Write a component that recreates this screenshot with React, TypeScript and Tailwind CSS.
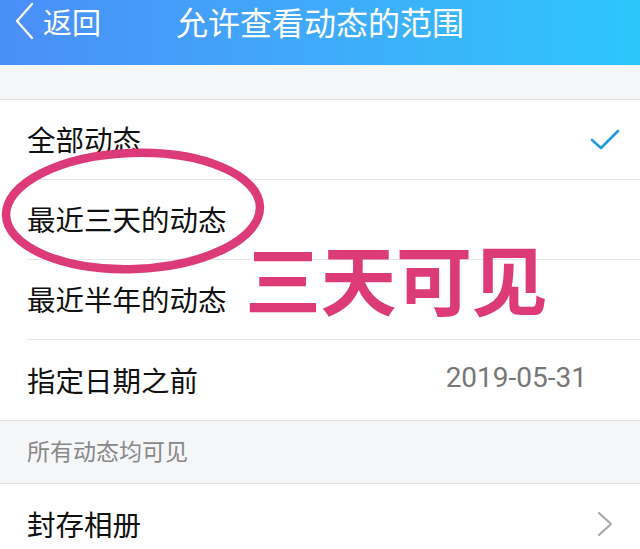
import React from "react";

const cjk = { fontFamily: '"Noto Sans CJK SC", "Noto Sans", sans-serif' };

function Row({
  label,
  right,
  last,
}: {
  label: string;
  right?: React.ReactNode;
  last?: boolean;
}) {
  return (
    <div className="pl-[27px] bg-white">
      <div
        className={
          "h-[80px] flex items-center justify-between pr-[20px] " +
          (last ? "" : "border-b border-[#e6e6e6]")
        }
      >
        <span className="text-[28.5px] text-[#111] leading-none">{label}</span>
        {right}
      </div>
    </div>
  );
}

export default function App() {
  return (
    <div className="relative w-[640px] h-[549px] overflow-hidden bg-[#f5f6f8]" style={cjk}>
      {/* header */}
      <div className="relative h-[65px] bg-gradient-to-r from-[#4a8ef8] to-[#2cc6fb] text-white">
        <div className="h-[42px] flex items-center justify-center">
          <div className="absolute left-[14px] top-[2px] flex items-center h-[38px]">
            <svg width="20" height="38" viewBox="0 0 20 38" fill="none">
              <path d="M18 2 L3 19 L18 36" stroke="white" strokeWidth="2.2" strokeLinecap="round" strokeLinejoin="round" />
            </svg>
            <span className="ml-[9px] text-[29px] leading-[1.2]">返回</span>
          </div>
          <span className="text-[32px] leading-[1.2]">允许查看动态的范围</span>
        </div>
      </div>

      <div className="h-[35px] border-b border-[#e3e3e3]" />

      <div className="bg-white border-b border-[#e3e3e3]">
        <Row
          label="全部动态"
          right={
            <svg width="30" height="22" viewBox="0 0 30 22" fill="none">
              <path d="M2 11 L11 19 L28 2" stroke="#1f9ae0" strokeWidth="2.6" strokeLinecap="round" strokeLinejoin="round" />
            </svg>
          }
        />
        <Row label="最近三天的动态" />
        <Row label="最近半年的动态" />
        <Row
          label="指定日期之前"
          last
          right={
            <span
              className="text-[28px] text-[#777] leading-none mr-[33px] -mt-[4px]"
              style={{ fontFamily: "Roboto, sans-serif" }}
            >
              2019-05-31
            </span>
          }
        />
      </div>

      <div className="h-[63px] flex items-center pl-[27px] border-b border-[#e3e3e3]">
        <span className="text-[23px] text-[#888] leading-none -mt-[4px]">所有动态均可见</span>
      </div>

      <div className="bg-white">
        <Row
          label="封存相册"
          last
          right={
            <svg width="16" height="26" viewBox="0 0 16 26" fill="none" className="mr-[7px]">
              <path d="M2 2 L14 13 L2 24" stroke="#aaa" strokeWidth="2.2" strokeLinecap="round" strokeLinejoin="round" />
            </svg>
          }
        />
      </div>

      {/* annotation overlay */}
      <svg className="absolute left-0 top-[146px]" width="272" height="130" viewBox="0 0 272 130" fill="none">
        <ellipse cx="133" cy="65" rx="127" ry="58" stroke="#dc3a78" strokeWidth="8.5" transform="rotate(-2 133 65)" />
      </svg>
      <div className="absolute left-[245px] top-[239px] text-[76px] font-bold leading-none text-[#dd3a78] tracking-[-0.5px]">
        三天可见
      </div>
    </div>
  );
}
